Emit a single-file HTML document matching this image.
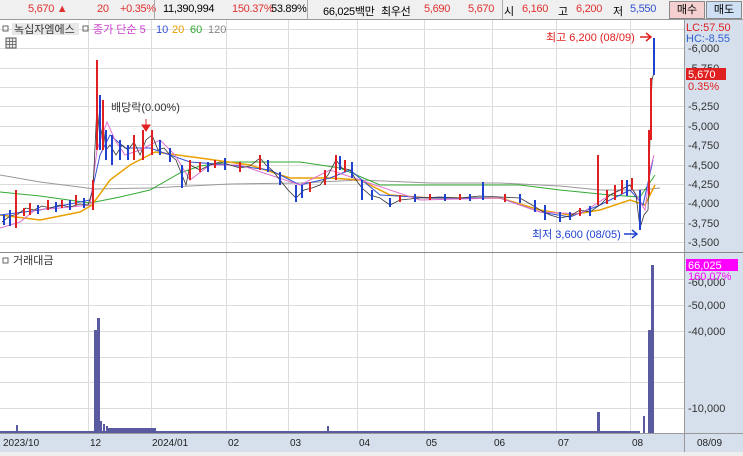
<!DOCTYPE html><html><head><meta charset="utf-8"><style>
body{margin:0;width:743px;height:456px;overflow:hidden;background:#fff;font-family:"Liberation Sans","Noto Sans CJK KR",sans-serif;font-size:11px;position:relative}
.top{position:absolute;left:0;top:0;width:743px;height:19px;background:#f0f0f0;border-bottom:1px solid #999}
.t{position:absolute;top:3px;white-space:nowrap;letter-spacing:-0.3px}
.r{color:#e03030}.b{color:#3050d0}
.btn{position:absolute;top:1px;height:16px;border:1px solid #888;text-align:center;line-height:16px}
</style></head><body>
<div class="top">
<span class="t r" style="left:28px">5,670 ▲</span>
<span class="t r" style="left:97px">20</span><span class="t r" style="left:120px">+0.35%</span>
<div style="position:absolute;left:154px;top:0;width:1px;height:19px;background:#aaa"></div>
<span class="t" style="left:163px">11,390,994</span>
<span class="t r" style="left:232px">150.37%</span><span class="t" style="left:271px">53.89%</span>
<div style="position:absolute;left:307px;top:0;width:1px;height:19px;background:#aaa"></div>
<span class="t" style="left:323px">66,025백만</span><span class="t" style="left:381px">최우선</span>
<span class="t r" style="left:424px">5,690</span><span class="t r" style="left:468px">5,670</span>
<div style="position:absolute;left:502px;top:0;width:1px;height:19px;background:#aaa"></div>
<span class="t" style="left:504px">시</span><span class="t r" style="left:522px">6,160</span>
<span class="t" style="left:558px">고</span><span class="t r" style="left:576px">6,200</span>
<span class="t" style="left:613px">저</span><span class="t b" style="left:630px">5,550</span>
<div class="btn" style="left:669px;width:34px;background:#f4d0d0">매수</div>
<div class="btn" style="left:706px;width:34px;background:#cfe0f4">매도</div>
</div>
<div style="position:absolute;left:684px;top:20px;width:59px;height:436px;background:#d6e0ec;border-left:1px solid #999"></div>
<svg width="743" height="456" style="position:absolute;left:0;top:0" font-family="Liberation Sans,Noto Sans CJK KR,sans-serif" font-size="11">
<g stroke="#dcdcdc" stroke-width="1">
<line x1="88.5" y1="20" x2="88.5" y2="433"/><line x1="151.5" y1="20" x2="151.5" y2="433"/><line x1="226.5" y1="20" x2="226.5" y2="433"/><line x1="288.5" y1="20" x2="288.5" y2="433"/><line x1="357.5" y1="20" x2="357.5" y2="433"/><line x1="424.5" y1="20" x2="424.5" y2="433"/><line x1="492.5" y1="20" x2="492.5" y2="433"/><line x1="556.5" y1="20" x2="556.5" y2="433"/><line x1="630.5" y1="20" x2="630.5" y2="433"/>
<line x1="0" y1="29.5" x2="684" y2="29.5"/><line x1="0" y1="48.5" x2="684" y2="48.5"/><line x1="0" y1="68.5" x2="684" y2="68.5"/><line x1="0" y1="87.5" x2="684" y2="87.5"/><line x1="0" y1="106.5" x2="684" y2="106.5"/><line x1="0" y1="126.5" x2="684" y2="126.5"/><line x1="0" y1="145.5" x2="684" y2="145.5"/><line x1="0" y1="165.5" x2="684" y2="165.5"/><line x1="0" y1="184.5" x2="684" y2="184.5"/><line x1="0" y1="203.5" x2="684" y2="203.5"/><line x1="0" y1="223.5" x2="684" y2="223.5"/><line x1="0" y1="242.5" x2="684" y2="242.5"/>
<line x1="0" y1="279.5" x2="684" y2="279.5"/><line x1="0" y1="305.5" x2="684" y2="305.5"/><line x1="0" y1="331.5" x2="684" y2="331.5"/><line x1="0" y1="357.5" x2="684" y2="357.5"/><line x1="0" y1="382.5" x2="684" y2="382.5"/><line x1="0" y1="408.5" x2="684" y2="408.5"/>
</g>
<line x1="0" y1="252.5" x2="743" y2="252.5" stroke="#888"/>
<rect x="0" y="433" width="684" height="19" fill="#d6e0ec"/><line x1="0" y1="433.5" x2="743" y2="433.5" stroke="#999"/>
<rect x="0" y="452" width="743" height="4" fill="#eee"/>
<g font-size="10" fill="#222"><text x="3" y="446">2023/10</text><text x="90" y="446">12</text><text x="152" y="446">2024/01</text><text x="228" y="446">02</text><text x="290" y="446">03</text><text x="359" y="446">04</text><text x="426" y="446">05</text><text x="494" y="446">06</text><text x="558" y="446">07</text><text x="632" y="446">08</text><text x="697" y="446">08/09</text></g>
<polyline fill="none" stroke="#999" points="0,175 40,182 95,189 150,188 230,184 300,183 360,180 430,183 500,183 560,186 600,190 640,190 660,188"/>
<polyline fill="none" stroke="#3a3" points="0,192 40,196 90,203 120,197 150,190 180,173 200,166 230,162 300,162 340,168 380,185 460,185 520,185 560,190 610,195 640,197 655,175"/>
<polyline fill="none" stroke="#e9a000" stroke-width="1.5" points="0,215 40,220 80,212 92,205 110,180 130,165 155,152 200,158 250,165 290,178 330,178 360,180 390,195 430,198 500,198 540,210 570,215 600,210 630,200 645,205 655,185"/>
<polyline fill="none" stroke="#3050d0" points="0,215 40,210 90,200 100,155 110,135 125,148 150,148 190,162 230,165 270,170 300,185 330,178 350,170 380,195 430,198 500,198 540,212 570,217 600,205 630,190 643,205 653,160"/>
<polyline fill="none" stroke="#e070d0" points="0,228 20,222 35,210 60,208 90,205 97,150 107,122 115,140 125,155 140,150 160,140 175,155 190,180 210,165 240,165 300,185 330,170 360,180 420,200 500,198 540,212 580,214 610,195 630,185 645,210 650,170 654,155"/>
<polyline fill="none" stroke="#333" stroke-width="0.8" points="2,222 10,216 18,214 26,208 34,210 42,206 50,208 60,205 70,207 80,204 88,205 93,190 97,105 100,140 103,125 106,150 110,145 116,155 122,145 128,150 134,142 140,155 146,140 152,135 158,150 164,148 170,155 176,160 182,175 186,185 190,165 200,170 210,165 220,162 230,165 240,168 250,166 260,158 266,165 272,170 280,180 288,190 296,198 304,190 312,188 320,185 328,175 336,160 342,168 350,170 356,180 362,188 370,195 380,198 390,205 400,200 420,198 440,197 460,198 480,196 500,197 520,198 532,205 540,210 550,215 560,218 570,216 580,210 590,212 600,205 610,195 620,190 630,185 636,195 640,228 644,215 648,210 650,138 652,80 654,72"/>
<g stroke="#e02020" stroke-width="2">
<line x1="97" y1="60" x2="97" y2="150"/><line x1="103" y1="100" x2="103" y2="150"/><line x1="134" y1="135" x2="134" y2="160"/><line x1="152" y1="130" x2="152" y2="155"/><line x1="190" y1="160" x2="190" y2="180"/><line x1="260" y1="155" x2="260" y2="170"/><line x1="336" y1="155" x2="336" y2="180"/><line x1="598" y1="155" x2="598" y2="205"/><line x1="615" y1="185" x2="615" y2="200"/><line x1="649" y1="130" x2="649" y2="195"/><line x1="651" y1="78" x2="651" y2="140"/><line x1="30" y1="203" x2="30" y2="215"/><line x1="93" y1="180" x2="93" y2="210"/>
<line x1="16" y1="190" x2="16" y2="228"/><line x1="24" y1="208" x2="24" y2="216"/><line x1="48" y1="200" x2="48" y2="210"/><line x1="62" y1="200" x2="62" y2="208"/><line x1="76" y1="195" x2="76" y2="205"/><line x1="143" y1="130" x2="143" y2="160"/><line x1="200" y1="162" x2="200" y2="172"/><line x1="215" y1="160" x2="215" y2="168"/><line x1="240" y1="162" x2="240" y2="172"/><line x1="310" y1="182" x2="310" y2="192"/><line x1="325" y1="170" x2="325" y2="185"/><line x1="400" y1="195" x2="400" y2="202"/><line x1="430" y1="194" x2="430" y2="200"/><line x1="460" y1="194" x2="460" y2="200"/><line x1="505" y1="194" x2="505" y2="202"/><line x1="580" y1="208" x2="580" y2="216"/><line x1="607" y1="190" x2="607" y2="204"/><line x1="622" y1="180" x2="622" y2="194"/><line x1="632" y1="178" x2="632" y2="190"/><line x1="345" y1="160" x2="345" y2="172"/>
</g>
<g stroke="#2040d0" stroke-width="2">
<line x1="100" y1="95" x2="100" y2="150"/><line x1="106" y1="130" x2="106" y2="160"/><line x1="182" y1="165" x2="182" y2="188"/><line x1="296" y1="185" x2="296" y2="202"/><line x1="362" y1="180" x2="362" y2="200"/><line x1="545" y1="205" x2="545" y2="220"/><line x1="640" y1="190" x2="640" y2="230"/><line x1="654" y1="38" x2="654" y2="75"/><line x1="10" y1="210" x2="10" y2="226"/><line x1="483" y1="182" x2="483" y2="200"/>
<line x1="4" y1="215" x2="4" y2="225"/><line x1="38" y1="205" x2="38" y2="214"/><line x1="56" y1="202" x2="56" y2="212"/><line x1="70" y1="200" x2="70" y2="210"/><line x1="84" y1="198" x2="84" y2="208"/><line x1="112" y1="135" x2="112" y2="165"/><line x1="120" y1="140" x2="120" y2="160"/><line x1="128" y1="145" x2="128" y2="160"/><line x1="160" y1="140" x2="160" y2="155"/><line x1="170" y1="148" x2="170" y2="162"/><line x1="208" y1="162" x2="208" y2="172"/><line x1="225" y1="158" x2="225" y2="170"/><line x1="268" y1="160" x2="268" y2="172"/><line x1="280" y1="172" x2="280" y2="185"/><line x1="302" y1="185" x2="302" y2="198"/><line x1="340" y1="156" x2="340" y2="170"/><line x1="352" y1="162" x2="352" y2="178"/><line x1="372" y1="190" x2="372" y2="200"/><line x1="390" y1="198" x2="390" y2="207"/><line x1="415" y1="194" x2="415" y2="202"/><line x1="445" y1="194" x2="445" y2="201"/><line x1="470" y1="194" x2="470" y2="201"/><line x1="520" y1="194" x2="520" y2="203"/><line x1="535" y1="200" x2="535" y2="212"/><line x1="560" y1="212" x2="560" y2="222"/><line x1="570" y1="212" x2="570" y2="220"/><line x1="590" y1="206" x2="590" y2="216"/><line x1="627" y1="180" x2="627" y2="196"/>
</g>
<text x="111" y="111" fill="#333">배당락(0.00%)</text>
<path d="M146 119v8M142 125l4 6 4-6z" stroke="#e02020" fill="#e02020"/>
<text x="546" y="41" fill="#e02020">최고 6,200 (08/09)</text>
<path d="M640 37h10M646 33l5 4-5 4" stroke="#e02020" fill="none" stroke-width="1.5"/>
<text x="532" y="238" fill="#2040d0">최저 3,600 (08/05)</text>
<path d="M624 234h12M632 230l5 4-5 4" stroke="#2040d0" fill="none" stroke-width="1.5"/>
<g fill="#5a5aa0">
<rect x="94" y="330" width="3" height="103"/><rect x="97" y="318" width="3" height="115"/><rect x="100" y="421" width="2" height="12"/><rect x="103" y="424" width="2" height="9"/><rect x="106" y="426" width="2" height="7"/><rect x="16" y="425" width="2" height="8"/><rect x="327" y="426" width="2" height="7"/><rect x="597" y="412" width="3" height="21"/><rect x="643" y="416" width="2" height="17"/><rect x="648" y="330" width="3" height="103"/><rect x="651" y="265" width="3" height="168"/>
<rect x="0" y="431" width="640" height="2"/>
<rect x="108" y="428" width="48" height="5"/>
</g>
<g font-size="11" fill="#333">
<text x="688" y="52">-6,000</text><text x="688" y="72">-5,750</text><text x="688" y="110">-5,250</text><text x="688" y="130">-5,000</text><text x="688" y="149">-4,750</text><text x="688" y="169">-4,500</text><text x="688" y="188">-4,250</text><text x="688" y="207">-4,000</text><text x="688" y="227">-3,750</text><text x="688" y="246">-3,500</text>
<text x="688" y="286">-60,000</text><text x="688" y="309">-50,000</text><text x="688" y="335">-40,000</text><text x="688" y="412">-10,000</text>
</g>
<text x="686" y="31" fill="#e02020">LC:57.50</text><text x="686" y="42" fill="#3060d0">HC:-8.55</text>
<rect x="686" y="68" width="40" height="12" fill="#e02020"/><text x="688" y="78" fill="#fff">5,670</text>
<text x="688" y="90" fill="#e02020">0.35%</text>
<rect x="686" y="259" width="52" height="12" fill="#f0f"/><text x="688" y="269" fill="#fff">66,025</text>
<text x="688" y="280" fill="#f0f">160.07%</text>
<rect x="12" y="23" width="67" height="12" fill="#e8e8e8"/><text x="14" y="33" fill="#333">녹십자엠에스</text>
<rect x="3" y="26" width="5" height="5" fill="none" stroke="#666"/><rect x="83" y="26" width="5" height="5" fill="none" stroke="#666"/>
<text x="93" y="33" fill="#d040d0">종가 단순 5</text><text x="156" y="33" fill="#3050d0">10</text><text x="172" y="33" fill="#e9a000">20</text><text x="190" y="33" fill="#3a3">60</text><text x="208" y="33" fill="#888">120</text>
<rect x="6" y="38" width="10" height="10" fill="#eee" stroke="#555"/><path d="M6 41.5h10M6 44.5h10M9.5 38v10M12.5 38v10" stroke="#555" stroke-width="0.7"/>
<rect x="3" y="258" width="5" height="5" fill="none" stroke="#666"/><text x="13" y="264" fill="#333">거래대금</text>
</svg>
</body></html>
